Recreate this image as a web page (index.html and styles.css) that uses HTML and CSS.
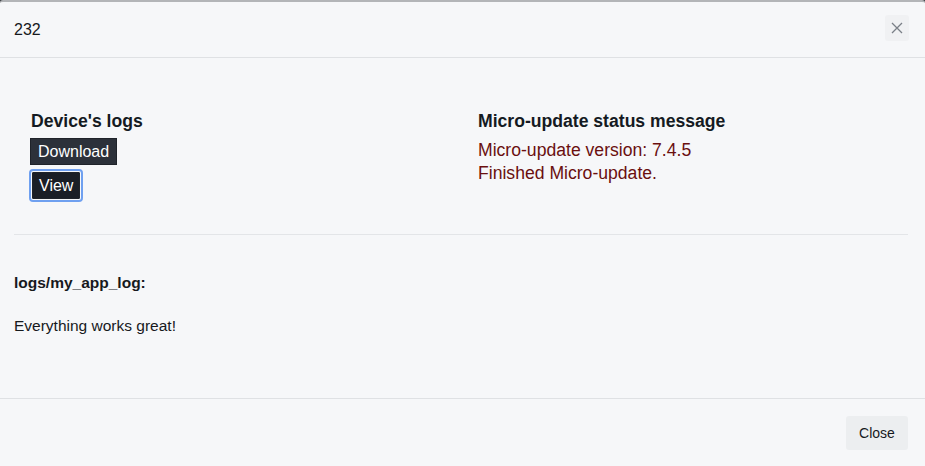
FILE: index.html
```html
<!DOCTYPE html>
<html>
<head>
<meta charset="utf-8">
<link rel="stylesheet" href="styles.css">
</head>
<body>
<div class="modal">
  <div class="modal-header">
    <div class="modal-title">232</div>
    <button class="btn-x" aria-label="Close">
      <svg width="12" height="12" viewBox="0 0 12 12"><path d="M1 1L11 11M11 1L1 11" stroke="#7a7f87" stroke-width="1.3" fill="none"/></svg>
    </button>
  </div>
  <div class="modal-body">
    <div class="row">
      <div class="col">
        <h3 class="heading">Device's logs</h3>
        <div class="btns">
          <button class="btn-dark">Download</button>
          <button class="btn-dark btn-focus">View</button>
        </div>
      </div>
      <div class="col">
        <h3 class="heading">Micro-update status message</h3>
        <div class="status">Micro-update version: 7.4.5</div>
        <div class="status">Finished Micro-update.</div>
      </div>
    </div>
    <hr class="divider">
    <div class="log">
      <div class="log-name">logs/my_app_log:</div>
      <div class="log-text">Everything works great!</div>
    </div>
  </div>
  <div class="modal-footer">
    <button class="btn-close">Close</button>
  </div>
</div>
</body>
</html>
```
FILE: styles.css
```css
html, body {
  margin: 0;
  padding: 0;
  background: #3a3d42;
  font-family: "Liberation Sans", Arial, sans-serif;
  color: #16191d;
}
.modal {
  width: 925px;
  height: 466px;
  box-sizing: border-box;
  background: #f6f7f9;
  border-top: 2px solid #b3b5b8;
  border-radius: 3px 3px 0 0;
  display: flex;
  flex-direction: column;
}
.modal-header {
  height: 56px;
  box-sizing: border-box;
  border-bottom: 1px solid #dfe1e4;
  display: flex;
  align-items: center;
  justify-content: space-between;
  padding: 0 17px 4px 14px;
}
.modal-title {
  font-size: 16px;
  padding-top: 4px;
}
.btn-x {
  width: 24px;
  height: 26px;
  border: none;
  background: #f0f1f3;
  border-radius: 3px;
  display: flex;
  align-items: center;
  justify-content: center;
  padding: 0;
  margin-right: -1px;
}
.modal-body {
  flex: 1;
  padding: 0 17px 0 14px;
}
.row {
  display: flex;
  padding: 53px 0 35px;
}
.col {
  flex: 1;
  padding-left: 17px;
}
.heading {
  margin: 0;
  font-size: 17.6px;
  line-height: 20px;
  font-weight: bold;
  color: #141a22;
}
.btns {
  display: flex;
  flex-direction: column;
  align-items: flex-start;
  gap: 7px;
  margin-top: 7px;
}
.btn-dark {
  font-family: "Liberation Sans", Arial, sans-serif;
  font-size: 16px;
  line-height: 19px;
  color: #ffffff;
  background: #2c313a;
  border: 1px solid #1f232a;
  padding: 3px 7px;
  border-radius: 0;
  margin-left: -1px;
}
.btn-focus {
  background: #1a1e26;
  padding: 3px 6px;
  outline: 2px solid #6fa0f0;
  outline-offset: 1px;
  border-radius: 1px;
  margin-left: 1px;
}
.status {
  font-size: 17.6px;
  line-height: 23px;
  color: #6a0f0f;
}
.heading + .status {
  margin-top: 8px;
}
.divider {
  margin: 0;
  border: none;
  border-top: 1px solid #e3e5e8;
}
.log {
  padding-top: 38px;
}
.log-name {
  font-size: 15.5px;
  font-weight: bold;
  line-height: 19px;
}
.log-text {
  font-size: 15.5px;
  line-height: 19px;
  margin-top: 24px;
}
.modal-footer {
  height: 68px;
  box-sizing: border-box;
  border-top: 1px solid #dfe1e4;
  display: flex;
  justify-content: flex-end;
  align-items: flex-start;
  padding: 17px 17px 0;
}
.btn-close {
  font-family: "Liberation Sans", Arial, sans-serif;
  font-size: 14px;
  color: #16191d;
  background: #eceef0;
  border: none;
  border-radius: 3px;
  width: 62px;
  height: 34px;
}
```
